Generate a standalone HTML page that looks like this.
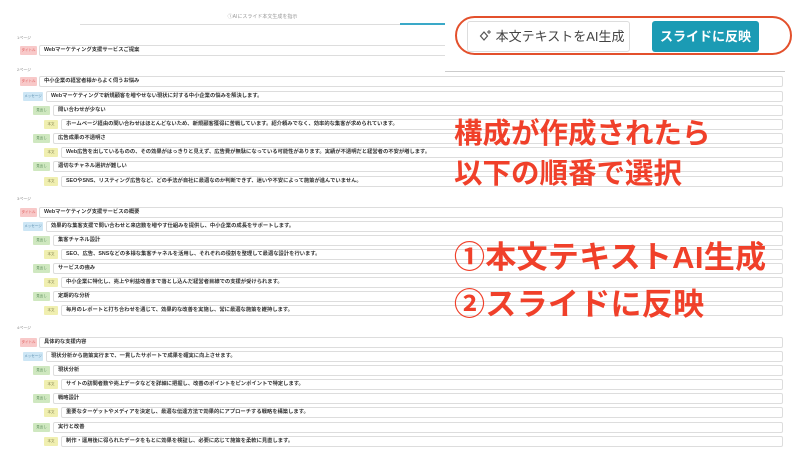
<!DOCTYPE html>
<html><head><meta charset="utf-8"><style>
*{margin:0;padding:0;box-sizing:border-box}
body{width:800px;height:450px;overflow:hidden;background:#fff;font-family:"Liberation Sans","Noto Sans CJK JP",sans-serif;position:relative;color:#333}
.pl{position:absolute;left:17px;font-size:4px;color:#888}
.r{position:absolute;height:11px;right:17px}
.b{position:absolute;left:0;top:1px;height:9px;font-size:3.5px;line-height:9px;text-align:center;border-radius:1px}
.t{position:absolute;top:0;bottom:0;right:0;border:1px solid #ddd;border-radius:2px;font-size:5.3px;font-weight:bold;color:#333;line-height:9px;padding-left:4px;background:#fff;white-space:nowrap;overflow:hidden}
.ti .b{width:17px;background:#f8c9c9;color:#d55}.ti .t{left:19px}
.ms .b{width:20px;background:#cde6f5;color:#58a}.ms .t{left:23px}
.mi .b{width:17px;background:#cfe8c0;color:#585}.mi .t{left:20px}
.hb .b{width:14px;background:#f0efb0;color:#885}.hb .t{left:17px}
.red{position:absolute;left:454px;color:#f0402a;font-weight:bold;font-family:"Liberation Sans","Noto Sans CJK JP",sans-serif;white-space:nowrap}
</style></head><body>
<div style="position:absolute;left:80px;top:13px;width:365px;text-align:center;font-size:5px;color:#999">①AIにスライド本文生成を指示</div>
<div style="position:absolute;left:80px;top:24px;width:365px;height:1px;background:#ddd"></div>
<div style="position:absolute;left:400px;top:23px;width:45px;height:2px;background:#3aa9c8"></div>
<div style="position:absolute;left:445px;top:71px;width:340px;height:1px;background:#ccc"></div>

<div class="pl" style="top:35px">1ページ</div>
<div class="r ti" style="left:20px;top:45px"><div class="b">タイトル</div><div class="t">Webマーケティング支援サービスご提案</div></div>

<div class="pl" style="top:67px">2ページ</div>
<div class="r ti" style="left:20px;top:76px"><div class="b">タイトル</div><div class="t">中小企業の経営者様からよく伺うお悩み</div></div>
<div class="r ms" style="left:23px;top:91px"><div class="b">メッセージ</div><div class="t">Webマーケティングで新規顧客を増やせない現状に対する中小企業の悩みを解決します。</div></div>
<div class="r mi" style="left:33px;top:105px"><div class="b">見出し</div><div class="t">問い合わせが少ない</div></div>
<div class="r hb" style="left:44px;top:119px"><div class="b">本文</div><div class="t">ホームページ経由の問い合わせはほとんどないため、新規顧客獲得に苦戦しています。紹介頼みでなく、効率的な集客が求められています。</div></div>
<div class="r mi" style="left:33px;top:133px"><div class="b">見出し</div><div class="t">広告成果の不透明さ</div></div>
<div class="r hb" style="left:44px;top:147px"><div class="b">本文</div><div class="t">Web広告を出しているものの、その効果がはっきりと見えず、広告費が無駄になっている可能性があります。実績が不透明だと経営者の不安が増します。</div></div>
<div class="r mi" style="left:33px;top:161px"><div class="b">見出し</div><div class="t">適切なチャネル選択が難しい</div></div>
<div class="r hb" style="left:44px;top:176px"><div class="b">本文</div><div class="t">SEOやSNS、リスティング広告など、どの手法が自社に最適なのか判断できず、迷いや不安によって施策が進んでいません。</div></div>

<div class="pl" style="top:196px">3ページ</div>
<div class="r ti" style="left:20px;top:207px"><div class="b">タイトル</div><div class="t">Webマーケティング支援サービスの概要</div></div>
<div class="r ms" style="left:23px;top:221px"><div class="b">メッセージ</div><div class="t">効果的な集客支援で問い合わせと来店数を増やす仕組みを提供し、中小企業の成長をサポートします。</div></div>
<div class="r mi" style="left:33px;top:235px"><div class="b">見出し</div><div class="t">集客チャネル設計</div></div>
<div class="r hb" style="left:44px;top:249px"><div class="b">本文</div><div class="t">SEO、広告、SNSなどの多様な集客チャネルを活用し、それぞれの役割を整理して最適な設計を行います。</div></div>
<div class="r mi" style="left:33px;top:263px"><div class="b">見出し</div><div class="t">サービスの強み</div></div>
<div class="r hb" style="left:44px;top:277px"><div class="b">本文</div><div class="t">中小企業に特化し、売上や利益改善まで落とし込んだ経営者目線での支援が受けられます。</div></div>
<div class="r mi" style="left:33px;top:291px"><div class="b">見出し</div><div class="t">定期的な分析</div></div>
<div class="r hb" style="left:44px;top:305px"><div class="b">本文</div><div class="t">毎月のレポートと打ち合わせを通じて、効果的な改善を実施し、常に最適な施策を維持します。</div></div>

<div class="pl" style="top:325px">4ページ</div>
<div class="r ti" style="left:20px;top:337px"><div class="b">タイトル</div><div class="t">具体的な支援内容</div></div>
<div class="r ms" style="left:23px;top:351px"><div class="b">メッセージ</div><div class="t">現状分析から施策実行まで、一貫したサポートで成果を確実に向上させます。</div></div>
<div class="r mi" style="left:33px;top:365px"><div class="b">見出し</div><div class="t">現状分析</div></div>
<div class="r hb" style="left:44px;top:379px"><div class="b">本文</div><div class="t">サイトの訪問者数や売上データなどを詳細に把握し、改善のポイントをピンポイントで特定します。</div></div>
<div class="r mi" style="left:33px;top:393px"><div class="b">見出し</div><div class="t">戦略設計</div></div>
<div class="r hb" style="left:44px;top:407px"><div class="b">本文</div><div class="t">重要なターゲットやメディアを決定し、最適な伝達方法で効果的にアプローチする戦略を構築します。</div></div>
<div class="r mi" style="left:33px;top:422px"><div class="b">見出し</div><div class="t">実行と改善</div></div>
<div class="r hb" style="left:44px;top:436px"><div class="b">本文</div><div class="t">制作・運用後に得られたデータをもとに効果を検証し、必要に応じて施策を柔軟に見直します。</div></div>

<div style="position:absolute;left:445px;top:0;width:355px;height:70px;background:#fff"></div>
<div style="position:absolute;left:455px;top:16px;width:337px;height:39px;border:2.5px solid #e3502c;border-radius:20px;background:#fff"></div>
<div style="position:absolute;left:467px;top:21px;width:163px;height:31px;border:1px solid #ddd;border-radius:3px;background:#fff;font-size:13px;line-height:29px;color:#444;padding-left:10px">
<svg width="14" height="14" viewBox="0 0 14 14" style="vertical-align:-2px"><path d="M6 3 L9.5 7 L6 11 L2.5 7 Z" fill="none" stroke="#555" stroke-width="1.2"/><path d="M11 1v4M9 3h4" stroke="#555" stroke-width="1"/></svg> 本文テキストをAI生成</div>
<div style="position:absolute;left:652px;top:21px;width:107px;height:31px;border-radius:3px;background:#1b9bb4;color:#fff;font-size:13px;font-weight:bold;line-height:31px;text-align:center">スライドに反映</div>

<div class="red" style="top:111px;font-size:28.5px">構成が作成されたら</div>
<div class="red" style="top:151px;font-size:28.5px">以下の順番で選択</div>
<div class="red" style="top:232px;font-size:31px;letter-spacing:0.3px">①本文テキストAI生成</div>
<div class="red" style="top:279px;font-size:31px;letter-spacing:0.3px">②スライドに反映</div>
</body></html>
